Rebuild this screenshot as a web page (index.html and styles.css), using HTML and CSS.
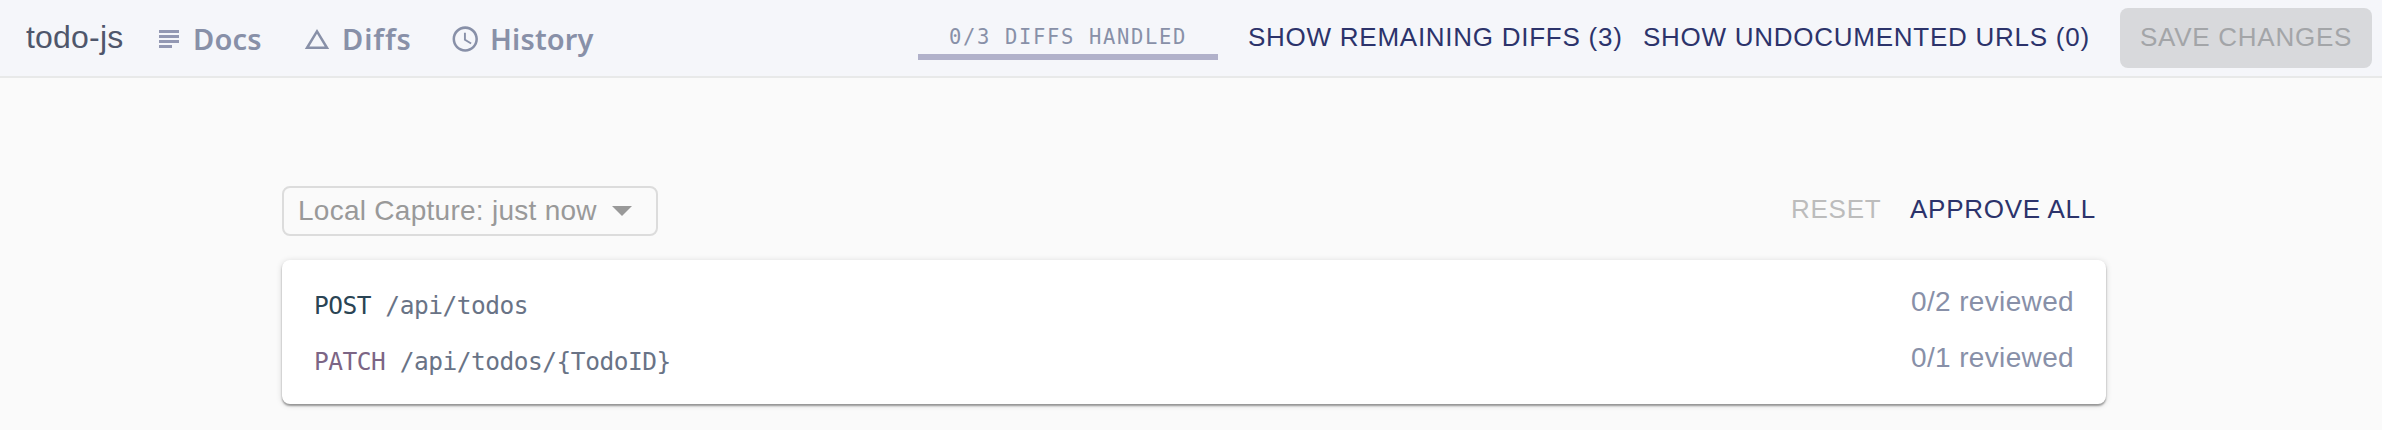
FILE: index.html
```html
<!DOCTYPE html>
<html lang="en">
<head>
<meta charset="utf-8">
<title>todo-js</title>
<link rel="stylesheet" href="styles.css">
</head>
<body>
<header class="topbar">
  <span class="project">todo-js</span>
  <nav class="nav">
    <a class="nav-item docs"><svg class="icon" viewBox="0 0 32 32"><path d="M6 8h20v3H6zM6 13h20v3H6zM6 18h20v3H6zM6 23h13v3H6z"/></svg><span class="label">Docs</span></a>
    <a class="nav-item diffs"><svg class="icon" viewBox="0 0 32 32"><path d="M17 11.8L24.7 24.6H9.3L17 11.8M17 7L4.8 27h24.4L17 7z"/></svg><span class="label">Diffs</span></a>
    <a class="nav-item history"><svg class="icon" viewBox="0 0 32 32"><g transform="translate(2 1.8) scale(1.27)"><path d="M11.99 2C6.47 2 2 6.48 2 12s4.47 10 9.99 10C17.52 22 22 17.52 22 12S17.52 2 11.99 2zM12 20c-4.42 0-8-3.58-8-8s3.58-8 8-8 8 3.58 8 8-3.58 8-8 8zm.5-13H11v6l5.25 3.15.75-1.23-4.5-2.67z"/></g></svg><span class="label">History</span></a>
  </nav>
  <div class="progress"><span class="progress-text">0/3 DIFFS HANDLED</span></div>
  <button class="btn remaining">SHOW REMAINING DIFFS (3)</button>
  <button class="btn undocumented">SHOW UNDOCUMENTED URLS (0)</button>
  <button class="btn save">SAVE CHANGES</button>
</header>
<main class="content">
  <div class="toolbar">
    <div class="select"><span class="select-text">Local Capture: just now</span><span class="caret"></span></div>
    <div class="actions">
      <button class="btn reset">RESET</button>
      <button class="btn approve">APPROVE ALL</button>
    </div>
  </div>
  <section class="card">
    <div class="row"><span class="endpoint"><span class="post">POST</span> /api/todos</span><span class="reviewed">0/2 reviewed</span></div>
    <div class="row"><span class="endpoint"><span class="patch">PATCH</span> /api/todos/{TodoID}</span><span class="reviewed">0/1 reviewed</span></div>
  </section>
</main>
</body>
</html>
```
FILE: styles.css
```css
* { box-sizing: border-box; }
body {
  margin: 0;
  height: 430px;
  overflow: hidden;
  background: #fafafa;
  font-family: "Liberation Sans", Arial, sans-serif;
}
.topbar {
  display: flex;
  align-items: center;
  height: 78px;
  padding: 0 10px 0 26px;
  background: #f5f6fa;
  border-bottom: 2px solid #e8e9e9;
  white-space: nowrap;
}
.project { width: 127px; padding-bottom: 2px; font-size: 32px; line-height: 40px; color: #4f566b; letter-spacing: 0.2px; }
.nav { display: flex; }
.nav-item { display: flex; align-items: center; color: #8890a8; }
.docs { width: 147px; }
.diffs { width: 148px; }
.icon { width: 32px; height: 32px; fill: currentColor; }
.docs .icon { fill: #9398b3; }
.label { margin-left: 8px; padding-top: 2px; font: 600 29px/40px "Noto Sans", sans-serif; letter-spacing: 0.2px; }
.diffs .label { margin-left: 10px; letter-spacing: 0.9px; }
.history .label { margin-left: 10px; letter-spacing: 0.15px; }
.progress {
  width: 300px;
  height: 44px;
  margin-left: auto;
  padding-top: 9px;
  text-align: center;
  border-bottom: 6px solid #b1b1ca;
}
.progress-text { display: block; font: 20.5px/25px "DejaVu Sans Mono", monospace; letter-spacing: 1.65px; color: #8890a8; }
.btn {
  padding: 0 0 2px;
  border: 0;
  background: none;
  font: 26px/30px "Liberation Sans", Arial, sans-serif;
  letter-spacing: 0.74px;
  text-align: left;
  color: #2c336b;
}
.remaining { width: 395px; margin-left: 30px; }
.undocumented { width: 477px; }
.save { width: 252px; height: 60px; border-radius: 8px; background: #d8d9dc; color: #a3a5a8; text-align: center; }
.content { width: 1824px; margin: 108px 0 0 282px; }
.toolbar { display: flex; justify-content: space-between; height: 74px; }
.select {
  display: flex;
  align-items: center;
  width: 376px;
  height: 50px;
  padding-left: 14px;
  border: 2px solid #dcdcdc;
  border-radius: 8px;
  color: #999;
}
.select-text { width: 314px; font-size: 28px; line-height: 32px; letter-spacing: 0.27px; }
.caret { border: 10px solid transparent; border-top-color: #999; border-bottom: 0; }
.actions { display: flex; align-items: flex-start; padding-top: 8px; }
.reset { width: 119px; color: #bcbcbc; }
.approve { width: 196px; }
.card {
  height: 144px;
  padding: 18px 32px;
  border-radius: 8px;
  background: #fff;
  box-shadow: 0 2px 2px rgba(0, 0, 0, 0.35), 0 1px 6px rgba(0, 0, 0, 0.15);
}
.row { display: flex; justify-content: space-between; height: 56px; }
.endpoint { padding-top: 10px; font: 24.5px/36px "DejaVu Sans Mono", monospace; letter-spacing: -0.48px; color: #697386; white-space: pre; }
.post { color: #2a4454; }
.patch { color: #7c6585; }
.reviewed { padding-top: 8px; font-size: 28px; line-height: 32px; letter-spacing: 0.35px; color: #8890a8; }
```
